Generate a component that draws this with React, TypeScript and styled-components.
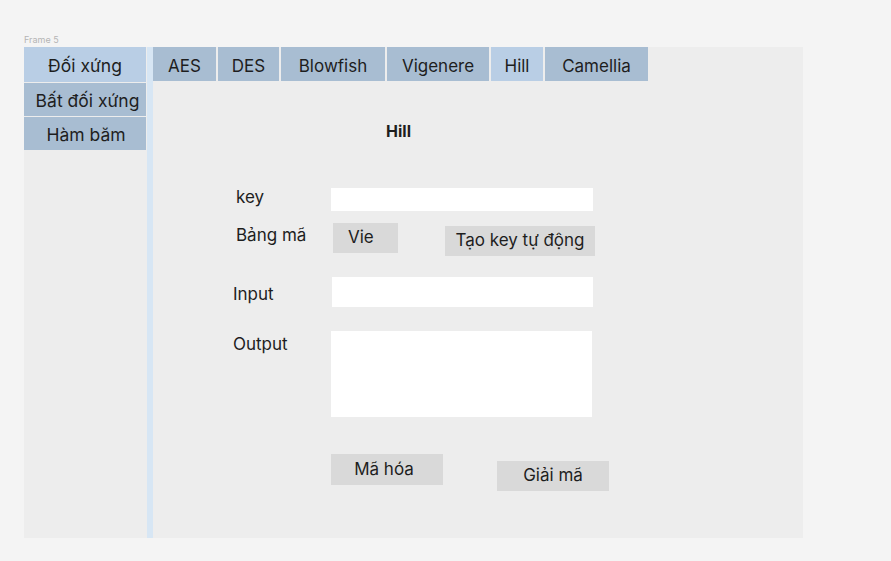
import React, { useState } from 'react';
import styled, { createGlobalStyle } from 'styled-components';

const GlobalStyle = createGlobalStyle`
    body {
        margin: 0;
        background: #f4f4f4;
        font-family: Inter, "Noto Sans", sans-serif;
        color: #1e1e1e;
    }
`

const groups = [
    { name: 'Đối xứng', shift: 0 },
    { name: 'Bất đối xứng', shift: 5 },
    { name: 'Hàm băm', shift: 2 },
];

const tabs = [
    { name: 'AES', width: 63 },
    { name: 'DES', width: 61 },
    { name: 'Blowfish', width: 104 },
    { name: 'Vigenere', width: 102 },
    { name: 'Hill', width: 52 },
    { name: 'Camellia', width: 103 },
];

export default function App() {
    const [group, setGroup] = useState('Đối xứng');
    const [tab, setTab] = useState('Hill');

    return (
        <>
            <GlobalStyle />
            <Canvas>
                <FrameLabel>Frame 5</FrameLabel>
                <Frame>
                    <Sidebar>
                        {groups.map((g, i) => (
                            <SideItem
                                key={g.name}
                                $first={i === 0}
                                $shift={g.shift}
                                $active={g.name === group}
                                onClick={() => setGroup(g.name)}
                            >
                                {g.name}
                            </SideItem>
                        ))}
                    </Sidebar>
                    <Stripe />
                    <Main>
                        <TabBar>
                            {tabs.map((t) => (
                                <Tab key={t.name} $w={t.width} $active={t.name === tab} onClick={() => setTab(t.name)}>
                                    {t.name}
                                </Tab>
                            ))}
                        </TabBar>
                        <Title>{tab}</Title>
                        <Form>
                            <Row $top={47}>
                                <Label $indent={3} $top={-1}>key</Label>
                                <TextInput $w={262} $h={23} />
                            </Row>
                            <Row $top={12}>
                                <Label $indent={3} $top={2}>Bảng mã</Label>
                                <GrayButton $w={65} $left={2} $pad={15} $align="flex-start">Vie</GrayButton>
                                <GrayButton $w={150} $left={47} $top={3}>Tạo key tự động</GrayButton>
                            </Row>
                            <Row $top={21}>
                                <Label $top={7}>Input</Label>
                                <TextInput $w={261} $h={30} $left={1} />
                            </Row>
                            <Row $top={24}>
                                <Label $top={3}>Output</Label>
                                <OutputBox />
                            </Row>
                            <Row $top={37} $left={98}>
                                <GrayButton $w={112} $h={31} $pad={-6}>Mã hóa</GrayButton>
                                <GrayButton $w={112} $left={54} $top={7}>Giải mã</GrayButton>
                            </Row>
                        </Form>
                    </Main>
                </Frame>
            </Canvas>
        </>
    );
}

const Canvas = styled.div`
    padding: 33px 0 0 24px;
`

const FrameLabel = styled.div`
    font-size: 9px;
    line-height: 14px;
    color: #b4b4b4;
`

const Frame = styled.div`
    display: flex;
    width: 779px;
    height: 491px;
    background: #ededed;
`

const Sidebar = styled.div`
    display: flex;
    flex-direction: column;
    gap: 1px;
    width: 122px;
`

const SideItem = styled.div<{ $active?: boolean; $first?: boolean; $shift: number }>`
    height: ${({ $first }) => ($first ? 35 : 33)}px;
    box-sizing: border-box;
    padding: 1px 0 0 ${({ $shift }) => $shift}px;
    display: flex;
    align-items: center;
    justify-content: center;
    font-size: 17.5px;
    background: ${({ $active }) => ($active ? '#b9cee5' : '#a8bdd2')};
    cursor: pointer;
`

const Stripe = styled.div`
    width: 6px;
    margin-left: 1px;
    background: #d7e6f4;
`

const Main = styled.div`
    flex: 1;
    display: flex;
    flex-direction: column;
`

const TabBar = styled.div`
    display: flex;
    gap: 2px;
`

const Tab = styled.div<{ $w: number; $active?: boolean }>`
    width: ${({ $w }) => $w}px;
    height: 34px;
    box-sizing: border-box;
    padding-top: 4px;
    display: flex;
    align-items: center;
    justify-content: center;
    font-size: 17px;
    background: ${({ $active }) => ($active ? '#b9cee5' : '#a8bdd2')};
    cursor: pointer;
`

const Title = styled.div`
    margin: 41px 0 0 233px;
    font-size: 16px;
    line-height: 19px;
    font-weight: 700;
`

const Form = styled.div`
    display: flex;
    flex-direction: column;
    padding-left: 80px;
`

const Row = styled.div<{ $top: number; $left?: number }>`
    display: flex;
    align-items: flex-start;
    margin-top: ${({ $top }) => $top}px;
    margin-left: ${({ $left }) => $left ?? 0}px;
`

const Label = styled.div<{ $indent?: number; $top?: number }>`
    width: 98px;
    box-sizing: border-box;
    padding-left: ${({ $indent }) => $indent ?? 0}px;
    margin-top: ${({ $top }) => $top ?? 0}px;
    font-size: 17px;
    line-height: 20px;
`

const TextInput = styled.input<{ $w: number; $h: number; $left?: number }>`
    width: ${({ $w }) => $w}px;
    height: ${({ $h }) => $h}px;
    margin-left: ${({ $left }) => $left ?? 0}px;
    box-sizing: border-box;
    border: none;
    outline: none;
    background: #fff;
    padding: 0 6px;
    font: inherit;
`

const OutputBox = styled.div`
    width: 261px;
    height: 86px;
    background: #fff;
`

const GrayButton = styled.button<{ $w: number; $h?: number; $left?: number; $top?: number; $pad?: number; $align?: string }>`
    width: ${({ $w }) => $w}px;
    height: ${({ $h }) => $h ?? 30}px;
    margin-left: ${({ $left }) => $left ?? 0}px;
    margin-top: ${({ $top }) => $top ?? 0}px;
    padding: 0 ${({ $pad }) => ($pad && $pad < 0 ? -$pad : 0)}px 2px ${({ $pad }) => ($pad && $pad > 0 ? $pad : 0)}px;
    display: flex;
    align-items: center;
    justify-content: ${({ $align }) => $align ?? 'center'};
    border: none;
    background: #d9d9d9;
    font-family: Inter, "Noto Sans", sans-serif;
    font-size: 17px;
    color: #1e1e1e;
    cursor: pointer;
`
